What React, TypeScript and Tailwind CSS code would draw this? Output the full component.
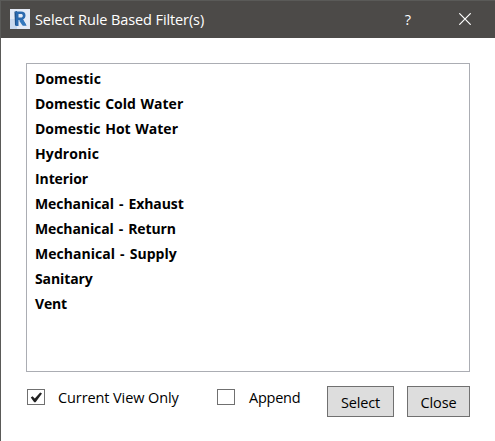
const filters: { name: string; spacing: string }[] = [
  { name: 'Domestic', spacing: 'tracking-[0.04px]' },
  { name: 'Domestic Cold Water', spacing: '[word-spacing:1px]' },
  { name: 'Domestic Hot Water', spacing: '[word-spacing:1px]' },
  { name: 'Hydronic', spacing: 'tracking-[0.1px]' },
  { name: 'Interior', spacing: 'tracking-[-0.1px]' },
  { name: 'Mechanical - Exhaust', spacing: 'tracking-[-0.08px] [word-spacing:1.5px]' },
  { name: 'Mechanical - Return', spacing: 'tracking-[-0.1px] [word-spacing:1.5px]' },
  { name: 'Mechanical - Supply', spacing: 'tracking-[0.02px] [word-spacing:1.5px]' },
  { name: 'Sanitary', spacing: 'tracking-[-0.1px]' },
  { name: 'Vent', spacing: 'tracking-[-0.15px]' },
];

function RevitIcon() {
  return (
    <svg className="h-5 w-5 shrink-0" viewBox="0 0 20 20">
      <rect width="20" height="20" fill="#e3eaf6" />
      <path d="M0 10h7v10H0z" fill="#cad9ee" />
      <path d="M4.500 3 7 2v15l-2-1z" fill="#17416f" />
      <path
        d="M4.500 2.500h6.500c3 0 4.500 1.500 4.500 4 0 2-1 3.300-2.500 4L16.500 16.500H13L10 11H8.500v6H5.500V4.500z M8.500 5v3.500h2.500c1.200 0 1.800-.7 1.800-1.800S12.200 5 11 5z"
        fill="#2a69ae"
        fillRule="evenodd"
      />
      <path d="m9 11.500 3.500 5h4L13 10.500z" fill="#3478bd" />
    </svg>
  );
}

function CheckBox({ checked }: { checked: boolean }) {
  return (
    <span className="mt-[3px] flex h-4 w-[18px] shrink-0 border border-[#707070] bg-white">
      {checked && (
        <svg className="h-3.5 w-4" viewBox="0 0 16 14">
          <path d="M2.800 7.500 4.500 6.300 6.800 8.600 12.200 2.500 14 3.500 7.600 12.200H6.200z" fill="#212121" />
        </svg>
      )}
    </span>
  );
}

export default function App() {
  return (
    <div className="flex h-[441px] w-[495px] flex-col border-l border-[#5a5a58] bg-white font-['Open_Sans','Noto_Sans',sans-serif] text-[14.5px] text-black">
      <header className="flex h-[38px] items-center border-t border-[#5a5a58] bg-[#4c4a48] pl-[9px] text-white">
        <div className="mt-[-2px]">
          <RevitIcon />
        </div>
        <h1 className="ml-[5px] w-[365px] whitespace-nowrap leading-5 tracking-[-0.1px]">Select Rule Based Filter(s)</h1>
        <button className="w-4 leading-5">?</button>
        <button className="mb-px ml-[43px]">
          <svg className="h-3 w-3" viewBox="0 0 12 12">
            <path d="m.3.3 11.400 11.400m0-11.400-11.400 11.400" stroke="#fff" strokeWidth="1.200" />
          </svg>
        </button>
      </header>
      <main className="flex flex-col pl-[25px] pt-[25px]">
        <ul className="h-[309px] w-[444px] border border-[#abadb3] pl-2 pt-[2px] text-sm font-bold">
          {filters.map((filter) => (
            <li key={filter.name} className="h-[25px] leading-[25px]">
              <span className={filter.spacing}>{filter.name}</span>
            </li>
          ))}
        </ul>
        <div className="mt-[14px] flex h-[31px] w-[444px] pl-px">
          <label className="flex w-[190px] whitespace-nowrap">
            <CheckBox checked />
            <span className="ml-[13px] leading-6 tracking-[-0.1px]">Current View Only</span>
          </label>
          <label className="flex w-[110px] whitespace-nowrap">
            <CheckBox checked={false} />
            <span className="ml-[14px] leading-6 tracking-[-0.25px]">Append</span>
          </label>
          <button className="h-[31px] w-[67px] shrink-0 border border-[#707070] bg-[#ddd] pt-[3px] tracking-[-0.15px]">Select</button>
          <button className="ml-[13px] h-[31px] w-[63px] shrink-0 border border-[#707070] bg-[#ddd] pt-[3px] tracking-[-0.15px]">Close</button>
        </div>
      </main>
    </div>
  );
}
